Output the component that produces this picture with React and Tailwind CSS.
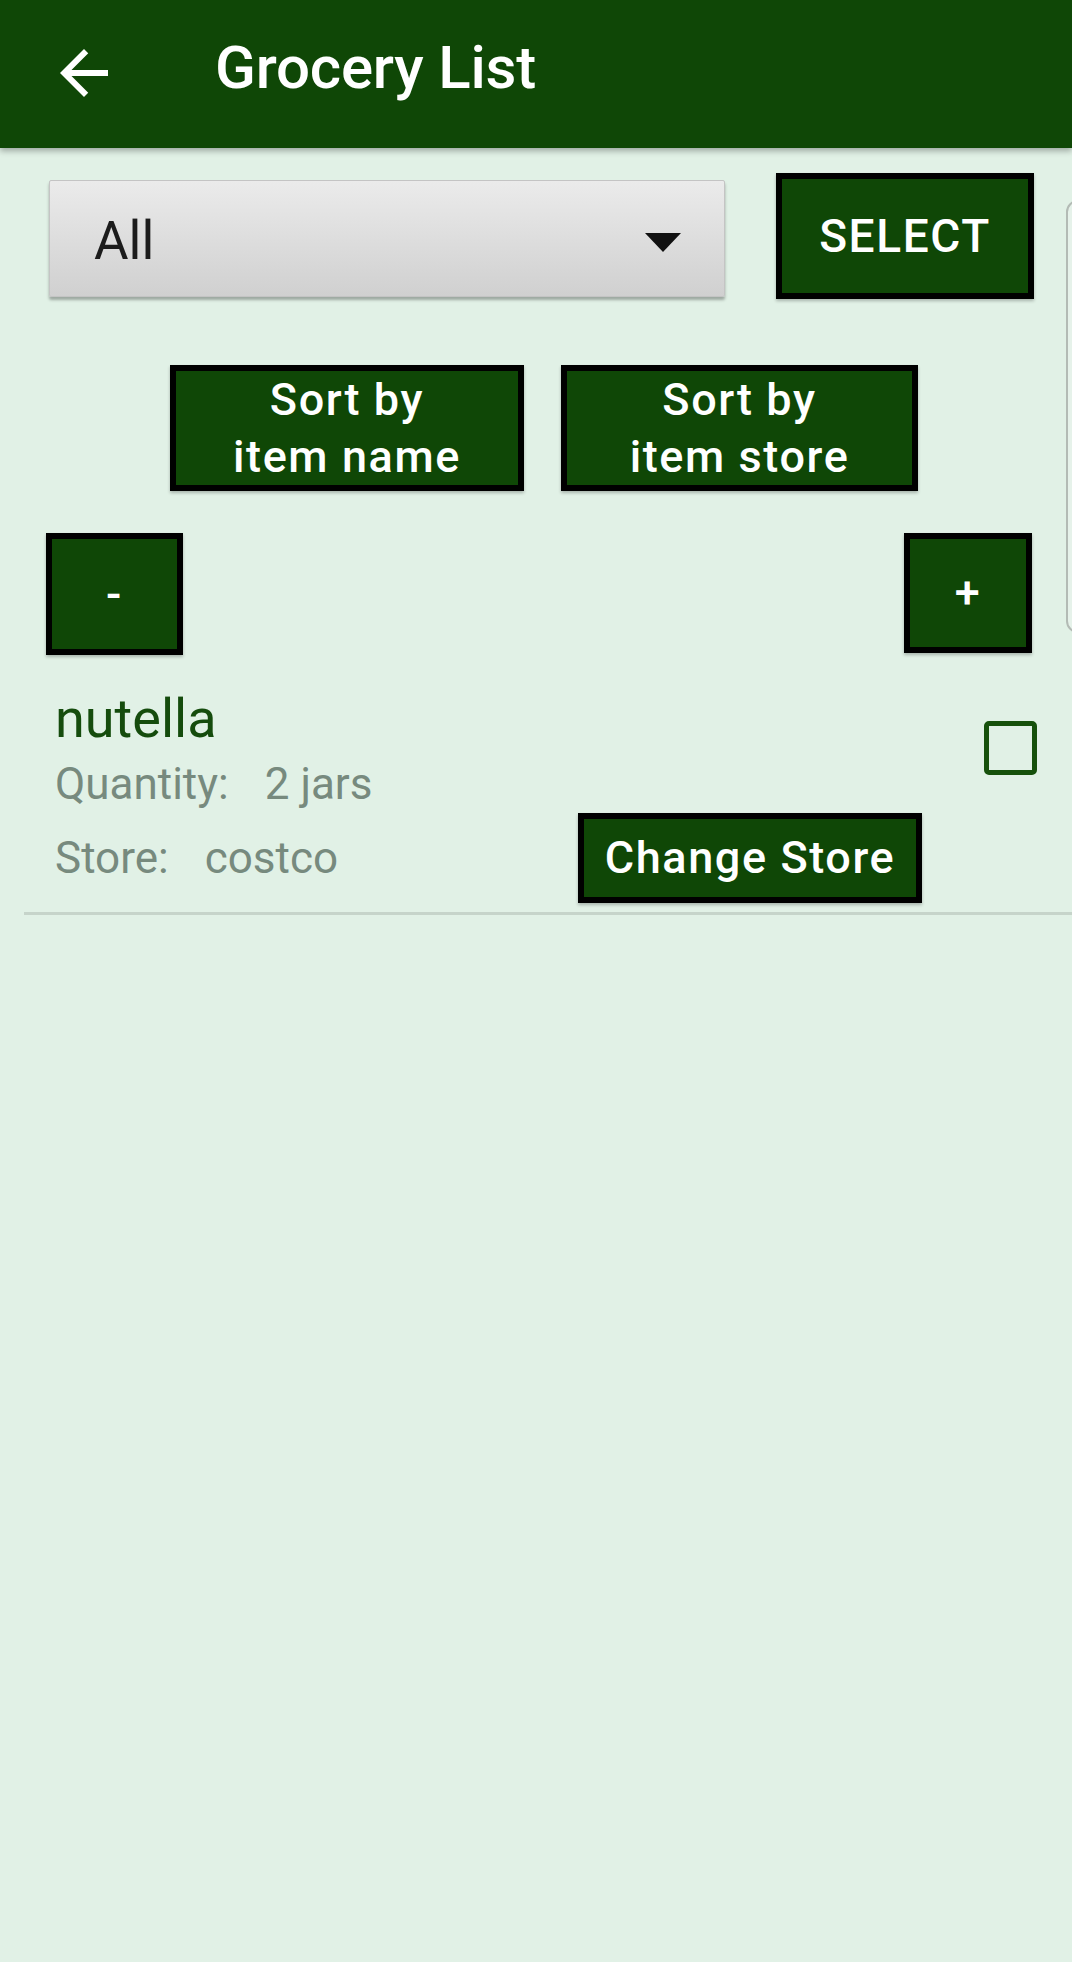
import React from "react";

const GREEN = "bg-[#0f4706]";

const GreenButton = ({ className = "", children }) => (
  <div
    className={`flex items-center justify-center border-[6px] border-black ${GREEN} text-white font-medium tracking-[1.6px] text-center shadow-[0_2px_3px_rgba(0,0,0,0.25)] ${className}`}
  >
    {children}
  </div>
);

const App = () => {
  return (
    <div className="relative w-[1072px] min-h-[1962px] overflow-hidden bg-[#e1f1e6] font-['Roboto',sans-serif]">
      <header className={`relative z-10 h-[148px] ${GREEN} flex items-center pb-[13px] shadow-[0_3px_6px_rgba(0,0,0,0.3)]`}>
        <div className="ml-[48px] w-[72px] h-[72px] mt-[10px]">
          <svg viewBox="0 0 24 24" width="72" height="72" fill="#ffffff">
            <path d="M20 11H7.83l5.59-5.59L12 4l-8 8 8 8 1.41-1.41L7.83 13H20v-2z" />
          </svg>
        </div>
        <h1 className="ml-[95px] text-[60px] leading-[60px] font-medium text-white tracking-[-0.2px]">
          Grocery List
        </h1>
      </header>

      <main>
        {/* spinner + select */}
        <div className="flex items-start pl-[49px] pt-[25px]">
          <div className="mt-[7px] w-[676px] h-[117px] flex items-center justify-between rounded-[2px] border border-[#c4c4c4] bg-gradient-to-b from-[#ebebeb] to-[#d0d0d0] shadow-[0_3px_3px_rgba(0,0,0,0.3)] pl-[44px] pr-[43px]">
            <span className="text-[53px] leading-[60px] text-[#1c1c1c] mt-[4px]">All</span>
            <svg width="36" height="19" viewBox="0 0 36 19" className="mt-[8px]">
              <polygon points="0,0 36,0 18,19" fill="#111111" />
            </svg>
          </div>
          <GreenButton className="ml-[51px] w-[258px] h-[126px] text-[46px] leading-[52px]">
            SELECT
          </GreenButton>
        </div>

        {/* sort buttons */}
        <div className="flex pl-[170px] mt-[66px] gap-[37px]">
          <GreenButton className="w-[354px] h-[126px] text-[45px] leading-[57px]">
            Sort by
            <br />
            item name
          </GreenButton>
          <GreenButton className="w-[357px] h-[126px] text-[45px] leading-[57px]">
            Sort by
            <br />
            item store
          </GreenButton>
        </div>

        {/* quantity buttons */}
        <div className="flex justify-between items-start pl-[46px] pr-[40px] mt-[42px]">
          <GreenButton className="w-[137px] h-[122px] text-[45px] leading-[50px] font-bold">-</GreenButton>
          <GreenButton className="w-[128px] h-[120px] text-[45px] leading-[50px] font-bold">+</GreenButton>
        </div>

        {/* item */}
        <div className="flex mt-[33px] pl-[55px] pr-[35px]">
          <div className="flex-1 flex flex-col">
            <div className="text-[54px] leading-[62px] text-[#154c0d]">nutella</div>
            <div className="mt-[9px] text-[44px] leading-[50px] text-[#778a7e] flex">
              <span>Quantity:</span>
              <span className="ml-[36px]">2 jars</span>
            </div>
            <div className="mt-[4px] flex items-center">
              <div className="w-[523px] text-[44px] leading-[50px] text-[#778a7e] flex">
                <span>Store:</span>
                <span className="ml-[36px]">costco</span>
              </div>
              <GreenButton className="w-[344px] h-[90px] text-[45px] leading-[50px]">
                Change Store
              </GreenButton>
            </div>
          </div>
          <div className="mt-[33px] w-[53px] h-[54px] rounded-[5px] border-[5px] border-[#16510c]" />
        </div>

        <div className="ml-[24px] mt-[9px] h-[3px] bg-[#c6d4ca]" />
      </main>

      {/* cut-off panel on the right edge */}
      <div className="absolute left-[1066px] top-[200px] w-[40px] h-[433px] rounded-[12px] border-2 border-[#b3bbb5] bg-[#e6f2ea]" />
    </div>
  );
};

export default App;
